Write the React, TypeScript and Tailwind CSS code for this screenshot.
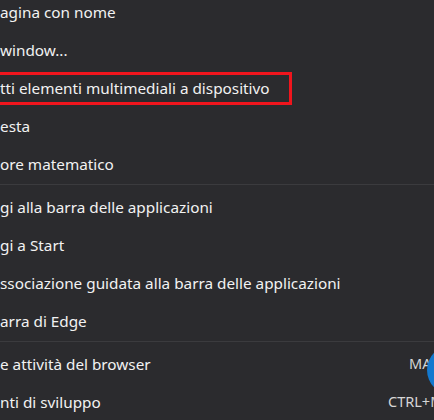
const font = { fontFamily: '"Noto Sans", "Open Sans", sans-serif' };

type Item = { label: string; shortcut?: string; highlight?: boolean };

const groups: Item[][] = [
  [
    { label: "agina con nome" },
    { label: "window..." },
    { label: "tti elementi multimediali a dispositivo", highlight: true },
    { label: "esta" },
    { label: "ore matematico" },
  ],
  [
    { label: "gi alla barra delle applicazioni" },
    { label: "gi a Start" },
    { label: "ssociazione guidata alla barra delle applicazioni" },
    { label: "arra di Edge" },
  ],
  [
    { label: "e attività del browser", shortcut: "MA" },
    { label: "nti di sviluppo", shortcut: "CTRL+M" },
  ],
];

function Row({ item }: { item: Item }) {
  return (
    <div className="relative flex h-[38px] shrink-0 items-center">
      <span className="whitespace-nowrap text-[15.3px] text-[#f2f2f2]">{item.label}</span>
      {item.shortcut && (
        <span
          className={`absolute top-1/2 -translate-y-1/2 whitespace-nowrap text-[14.5px] text-[#d6d6d6] ${
            item.shortcut === "MA" ? "left-[409px]" : "left-[388px]"
          }`}
        >
          {item.shortcut}
        </span>
      )}
      {item.highlight && (
        <span className="pointer-events-none absolute -left-[6px] top-[3px] h-[33px] w-[298px] border-[3px] border-[#f0151d]" />
      )}
    </div>
  );
}

export default function App() {
  return (
    <div className="relative h-[420px] w-[434px] overflow-hidden bg-[#2b2b2e]" style={font}>
      <div className="-mt-[7px] flex flex-col">
        {groups.map((group, gi) => (
          <div key={gi} className="flex flex-col">
            {gi > 0 && <div className="mb-[3px] mt-px h-px bg-[#3b3b3e]" />}
            {group.map((item) => (
              <Row key={item.label} item={item} />
            ))}
          </div>
        ))}
      </div>
      {/* blue circle at the edge */}
      <div className="absolute left-[427px] top-[345px] h-[50px] w-[50px] rounded-full bg-[#1379cf]" />
    </div>
  );
}
